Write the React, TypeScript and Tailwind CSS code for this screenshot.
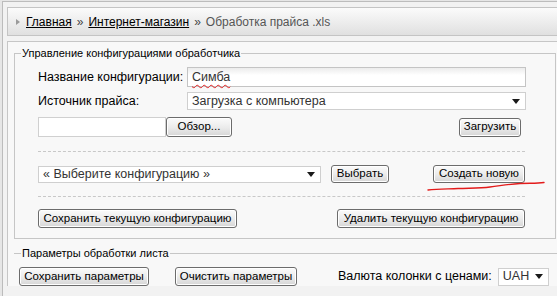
import React from 'react';

// общий стиль кнопок (серые, со скруглением)
const btn =
	'flex items-center justify-center whitespace-nowrap rounded-[3px] border border-[#6c6c6c] bg-gradient-to-b from-[#fbfbfb] via-[#ececec] to-[#d6d6d6] text-[11.5px] leading-none text-black shadow-[inset_0_0_0_1px_#ffffff]';

function Arrow() {
	return (
		<svg width="8" height="5" viewBox="0 0 8 5" className="shrink-0">
			<path d="M0 0h8L4 5z" fill="#1a1a1a" />
		</svg>
	);
}

function Select({ text, className }: { text: string; className: string }) {
	return (
		<div
			className={`flex items-center justify-between whitespace-nowrap border border-[#cfcfcf] bg-white pl-[4px] pr-[5px] text-[12.5px] text-[#333] ${className}`}
		>
			<span>{text}</span>
			<Arrow />
		</div>
	);
}

export default function App() {
	return (
		<div className="relative h-[296px] w-[557px] overflow-hidden whitespace-nowrap bg-[#e6e6e6] pl-[2px] pt-[1px] font-['Liberation_Sans',Arial,sans-serif] text-[12.5px] text-black">
			<div className="h-[400px] w-[620px] border-l border-t border-[#bcbcbc] bg-[#f2f2f2] pl-[4px] pt-[5px]">
				{/* хлебные крошки */}
				<div className="flex h-[29px] items-center border border-[#c4c4c4] bg-gradient-to-b from-[#fbfbfb] to-[#e0e0e0] pl-[8px] text-[12px]">
					<svg width="4" height="6" viewBox="0 0 4 6" className="mr-[6px]">
						<path d="M0 0l4 3-4 3z" fill="#9a9a9a" />
					</svg>
					<a href="#" className="text-black underline">
						Главная
					</a>
					<span className="mx-[5px] text-[#444]">»</span>
					<a href="#" className="text-black underline">
						Интернет-магазин
					</a>
					<span className="mx-[5px] text-[#444]">»</span>
					<span className="text-[#555]">Обработка прайса .xls</span>
				</div>

				<div className="mt-[5px] border-l border-t border-[#c6c6c6] bg-[#f8f8f8] pl-[6px] pt-[3px]">
					<fieldset className="w-[542px] border border-[#c6c6c6]">
						<legend className="ml-[6px] px-[1px] text-[11px] leading-[16px]">
							Управление конфигурациями обработчика
						</legend>
						<div className="pl-[23px] pb-[10px]">
							<div className="mt-[6px] flex h-[20px] items-center">
								<span className="w-[149px]">Название конфигурации:</span>
								<div className="flex h-[20px] w-[339px] items-center border border-[#c4c4c4] bg-gradient-to-b from-[#ececec] to-white to-40% pl-[4px] text-[#333]">
									<span className="underline decoration-[#e02020] decoration-wavy decoration-1 underline-offset-[3px]">
										Симба
									</span>
								</div>
							</div>
							<div className="mt-[5px] flex h-[18px] items-center">
								<span className="w-[149px]">Источник прайса:</span>
								<Select text="Загрузка с компьютера" className="h-[18px] w-[339px]" />
							</div>
							<div className="mt-[7px] flex w-[487px] items-center">
								<div className="h-[20px] w-[128px] border border-[#d0d0d0] bg-white" />
								<button className={`${btn} h-[20px] w-[66px]`}>Обзор...</button>
								<button className={`${btn} ml-auto mr-[4px] h-[19px] w-[62px]`}>Загрузить</button>
							</div>

							<div className="mt-[14px] w-[487px] border-t border-dashed border-[#c8c8c8]" />

							<div className="mt-[13px] flex w-[487px] items-center">
								<Select text="« Выберите конфигурацию »" className="h-[17px] w-[283px]" />
								<button className={`${btn} ml-[10px] h-[18px] w-[58px]`}>Выбрать</button>
								<button className={`${btn} ml-auto h-[18px] w-[92px]`}>Создать новую</button>
							</div>

							<div className="mt-[13px] w-[487px] border-t border-dashed border-[#c8c8c8]" />

							<div className="mt-[12px] flex w-[487px] items-center justify-between">
								<button className={`${btn} h-[19px] w-[199px]`}>Сохранить текущую конфигурацию</button>
								<button className={`${btn} h-[19px] w-[188px]`}>Удалить текущую конфигурацию</button>
							</div>
						</div>
					</fieldset>

					<fieldset className="mt-[6px] w-[560px] border-t border-[#c6c6c6]">
						<legend className="ml-[7px] px-[1px] text-[11px] leading-[16px]">Параметры обработки листа</legend>
						<div className="mt-[6px] flex items-center pl-[5px]">
							<button className={`${btn} h-[19px] w-[130px]`}>Сохранить параметры</button>
							<button className={`${btn} ml-[26px] h-[19px] w-[122px]`}>Очистить параметры</button>
							<span className="ml-[41px]">Валюта колонки с ценами:</span>
							<Select text="UAH" className="ml-[6px] h-[18px] w-[51px]" />
						</div>
					</fieldset>
				</div>
			</div>

			{/* красная пометка под кнопкой */}
			<svg className="absolute left-[424px] top-[179px]" width="124" height="14" viewBox="0 0 124 14">
				<path
					d="M4 11 C14 10 24 10 34 9.5 C46 9 56 9.5 66 8 C78 6.5 86 5 96 4.5 C106 4 112 4.5 120 3.5"
					fill="none"
					stroke="#e31b1b"
					strokeWidth="1.4"
					strokeLinecap="round"
				/>
			</svg>
		</div>
	);
}
